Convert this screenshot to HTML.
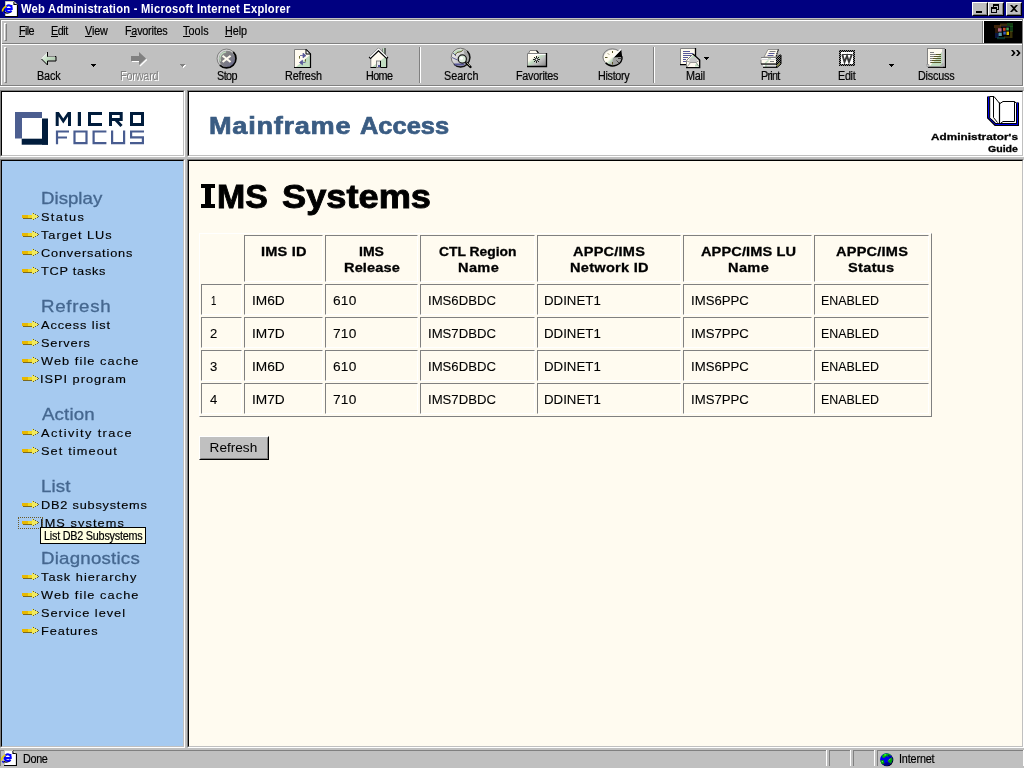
<!DOCTYPE html>
<html><head><meta charset="utf-8"><title>Web Administration - Microsoft Internet Explorer</title>
<style>
html,body{margin:0;padding:0;}
body{width:1024px;height:768px;overflow:hidden;background:#c0c0c0;font-family:"Liberation Sans",sans-serif;position:relative;}
div,span,svg{position:absolute;box-sizing:border-box;}
#win{left:0;top:0;width:1024px;height:768px;will-change:transform;}
.t{white-space:nowrap;transform-origin:0 0;line-height:normal;}
.px{background:#808080;}
.wh{background:#fff;}
.bk{background:#000;}
u{text-decoration:none;}
</style></head>
<body>
<div id="win">
<div style="left:0px;top:0px;width:1024px;height:18px;background:#000080;"></div>
<svg style="left:0px;top:0px" width="18" height="17" viewBox="0 0 18 17"><path d="M5.5 1.5H14L17.5 5V16.5H5.5Z" fill="#fff"/><path d="M14 1V4.5H17.5M17.5 4.5V16.5H5" stroke="#000" stroke-width="1.2" fill="none"/><path d="M5.5 16V1.5H14L17 4.5" stroke="#c8c8b8" stroke-width="1" fill="none"/><path d="M4.5 12.2C6 13.3 9 13.2 11.5 11.5" stroke="#000" stroke-width="1.2" fill="none"/><path d="M11.6 10.6C10 12.4 6.5 12.3 5.6 9.6C4.8 6.6 8 4.2 10.5 5.8C11.6 6.6 12 7.6 11.8 9H6" stroke="#0000ff" stroke-width="2" fill="none"/><rect x="11" y="5" width="1.4" height="1.4" fill="#0000ff"/><path d="M2.5 11.5C2.5 9 4.5 7 6.5 6" stroke="#e8d000" stroke-width="1.6" fill="none"/><path d="M3.2 12L4.6 14" stroke="#0000ff" stroke-width="1.2"/></svg>
<span class="t" style="left:21.00px;top:2px;line-height:14px;font-size:12px;font-weight:bold;color:#fff;letter-spacing:0.274px;transform:scaleX(0.9300);">Web Administration - Microsoft Internet Explorer</span>
<div style="left:972px;top:2px;width:16px;height:14px;background:#c0c0c0;border:1px solid;border-color:#fff #000 #000 #fff;">
<div style="left:0;top:0;width:14px;height:12px;border:1px solid;border-color:#c0c0c0 #808080 #808080 #c0c0c0;"></div>
<div style="left:3px;top:8px;width:6px;height:2px;background:#000"></div></div>
<div style="left:988px;top:2px;width:16px;height:14px;background:#c0c0c0;border:1px solid;border-color:#fff #000 #000 #fff;">
<div style="left:0;top:0;width:14px;height:12px;border:1px solid;border-color:#c0c0c0 #808080 #808080 #c0c0c0;"></div>
<div style="left:4px;top:1px;width:6px;height:6px;border:1px solid #000;border-top-width:2px;"></div>
<div style="left:2px;top:4px;width:6px;height:6px;border:1px solid #000;border-top-width:2px;background:#c0c0c0"></div></div>
<div style="left:1006px;top:2px;width:16px;height:14px;background:#c0c0c0;border:1px solid;border-color:#fff #000 #000 #fff;">
<div style="left:0;top:0;width:14px;height:12px;border:1px solid;border-color:#c0c0c0 #808080 #808080 #c0c0c0;"></div>
<svg style="left:3px;top:2px" width="8" height="7" viewBox="0 0 8 7"><path d="M0 0h2l2 2 2-2h2L5 3.5 8 7H6L4 5 2 7H0l3-3.5z" fill="#000"/></svg></div>
<div style="left:0px;top:18px;width:1024px;height:1px;background:#c0c0c0;"></div>
<div style="left:0px;top:19px;width:1024px;height:1px;background:#808080;"></div>
<div style="left:0px;top:20px;width:1024px;height:1px;background:#fff;"></div>
<div style="left:0px;top:19px;width:1px;height:67px;background:#808080;"></div>
<div style="left:1px;top:20px;width:1px;height:66px;background:#fff;"></div>
<div style="left:1022px;top:20px;width:1px;height:66px;background:#808080;"></div>
<div style="left:1023px;top:19px;width:1px;height:68px;background:#fff;"></div>
<div style="left:2px;top:43px;width:1020px;height:1px;background:#808080;"></div>
<div style="left:2px;top:44px;width:1020px;height:1px;background:#fff;"></div>
<div style="left:0px;top:85px;width:1023px;height:1px;background:#808080;"></div>
<div style="left:0px;top:86px;width:1024px;height:1px;background:#fff;"></div>
<div style="left:4px;top:23px;width:3px;height:18px;border:1px solid;border-color:#fff #808080 #808080 #fff;background:#c0c0c0"></div>
<div style="left:4px;top:47px;width:3px;height:36px;border:1px solid;border-color:#fff #808080 #808080 #fff;background:#c0c0c0"></div>
<div style="left:982px;top:21px;width:1px;height:22px;background:#808080;"></div>
<div style="left:983px;top:21px;width:1px;height:22px;background:#fff;"></div>
<div style="left:984px;top:21px;width:38px;height:22px;background:#000;"></div>
<svg style="left:984px;top:21px" width="38" height="22" viewBox="984 21 38 22"><g opacity=".9"><rect x="994" y="25" width="7" height="3" fill="#804818" opacity="0.55"/><rect x="1000" y="23.5" width="7" height="3" fill="#806020" opacity="0.5"/><rect x="1007" y="23" width="6" height="4" fill="#207020" opacity="0.6"/><rect x="1010" y="26" width="3" height="6" fill="#208030" opacity="0.5"/><rect x="1010" y="31" width="2.5" height="7" fill="#706010" opacity="0.55"/><rect x="995" y="28" width="3" height="5" fill="#603818" opacity="0.5"/><rect x="995" y="33" width="4" height="5" fill="#182878" opacity="0.6"/><rect x="997" y="37" width="8" height="2.2" fill="#106858" opacity="0.55"/><rect x="1004" y="36.3" width="6" height="1.8" fill="#605010" opacity="0.5"/><rect x="1001.5" y="26" width="8" height="1" fill="#302060" opacity="0.6"/><rect x="1002.4" y="26.8" width="7.4" height="9" fill="#000"/><rect x="1003" y="27.8" width="2.6" height="3" fill="#e05030"/><rect x="1006.3" y="27.6" width="2.5" height="2.8" fill="#48b860"/><rect x="1003.3" y="31.6" width="2.5" height="3" fill="#4068d0"/><rect x="1006.5" y="31.6" width="2.5" height="3.4" fill="#f0d000"/><rect x="998" y="28.2" width="3.6" height="3.4" fill="#c87090"/><rect x="998.6" y="32.6" width="3.2" height="3.4" fill="#60a8b8"/></g></svg>
<span class="t" style="left:19.10px;top:24px;line-height:14px;font-size:12px;font-weight:normal;color:#000;letter-spacing:-0.702px;transform:scaleX(0.9000);-webkit-text-stroke:0.2px #000;">File</span>
<span class="t" style="left:51.40px;top:24px;line-height:14px;font-size:12px;font-weight:normal;color:#000;letter-spacing:-0.522px;transform:scaleX(0.9000);-webkit-text-stroke:0.2px #000;">Edit</span>
<span class="t" style="left:85.10px;top:24px;line-height:14px;font-size:12px;font-weight:normal;color:#000;letter-spacing:-0.116px;transform:scaleX(0.9000);-webkit-text-stroke:0.2px #000;">View</span>
<span class="t" style="left:124.70px;top:24px;line-height:14px;font-size:12px;font-weight:normal;color:#000;letter-spacing:-0.252px;transform:scaleX(0.9000);-webkit-text-stroke:0.2px #000;">Favorites</span>
<span class="t" style="left:183.30px;top:24px;line-height:14px;font-size:12px;font-weight:normal;color:#000;letter-spacing:0.108px;transform:scaleX(0.9000);-webkit-text-stroke:0.2px #000;">Tools</span>
<span class="t" style="left:225.10px;top:24px;line-height:14px;font-size:12px;font-weight:normal;color:#000;letter-spacing:-0.076px;transform:scaleX(0.9000);-webkit-text-stroke:0.2px #000;">Help</span>
<div style="left:19px;top:36px;width:6px;height:1px;background:#000;"></div>
<div style="left:51px;top:36px;width:7px;height:1px;background:#000;"></div>
<div style="left:85px;top:36px;width:7px;height:1px;background:#000;"></div>
<div style="left:130px;top:36px;width:6px;height:1px;background:#000;"></div>
<div style="left:183px;top:36px;width:7px;height:1px;background:#000;"></div>
<div style="left:225px;top:36px;width:7px;height:1px;background:#000;"></div>
<span class="t" style="left:121.00px;top:70px;line-height:14px;font-size:12px;font-weight:normal;color:#fff;letter-spacing:-0.186px;transform:scaleX(0.9000);">Forward</span>
<span class="t" style="left:120.00px;top:69px;line-height:14px;font-size:12px;font-weight:normal;color:#808080;letter-spacing:-0.186px;transform:scaleX(0.9000);">Forward</span>
<span class="t" style="left:36.70px;top:69px;line-height:14px;font-size:12px;font-weight:normal;color:#000;letter-spacing:-0.152px;transform:scaleX(0.9000);-webkit-text-stroke:0.2px #000;">Back</span>
<span class="t" style="left:217.10px;top:69px;line-height:14px;font-size:12px;font-weight:normal;color:#000;letter-spacing:-0.634px;transform:scaleX(0.9000);-webkit-text-stroke:0.2px #000;">Stop</span>
<span class="t" style="left:284.80px;top:69px;line-height:14px;font-size:12px;font-weight:normal;color:#000;letter-spacing:-0.150px;transform:scaleX(0.9000);-webkit-text-stroke:0.2px #000;">Refresh</span>
<span class="t" style="left:365.60px;top:69px;line-height:14px;font-size:12px;font-weight:normal;color:#000;letter-spacing:-0.668px;transform:scaleX(0.9000);-webkit-text-stroke:0.2px #000;">Home</span>
<span class="t" style="left:444.10px;top:69px;line-height:14px;font-size:12px;font-weight:normal;color:#000;letter-spacing:0.042px;transform:scaleX(0.9000);-webkit-text-stroke:0.2px #000;">Search</span>
<span class="t" style="left:515.70px;top:69px;line-height:14px;font-size:12px;font-weight:normal;color:#000;letter-spacing:-0.266px;transform:scaleX(0.9000);-webkit-text-stroke:0.2px #000;">Favorites</span>
<span class="t" style="left:597.50px;top:69px;line-height:14px;font-size:12px;font-weight:normal;color:#000;letter-spacing:-0.352px;transform:scaleX(0.9000);-webkit-text-stroke:0.2px #000;">History</span>
<span class="t" style="left:685.80px;top:69px;line-height:14px;font-size:12px;font-weight:normal;color:#000;letter-spacing:-0.223px;transform:scaleX(0.9000);-webkit-text-stroke:0.2px #000;">Mail</span>
<span class="t" style="left:761.10px;top:69px;line-height:14px;font-size:12px;font-weight:normal;color:#000;letter-spacing:-0.835px;transform:scaleX(0.9000);-webkit-text-stroke:0.2px #000;">Print</span>
<span class="t" style="left:838.10px;top:69px;line-height:14px;font-size:12px;font-weight:normal;color:#000;letter-spacing:-0.337px;transform:scaleX(0.9000);-webkit-text-stroke:0.2px #000;">Edit</span>
<span class="t" style="left:917.70px;top:69px;line-height:14px;font-size:12px;font-weight:normal;color:#000;letter-spacing:-0.205px;transform:scaleX(0.9000);-webkit-text-stroke:0.2px #000;">Discuss</span>
<div style="left:419px;top:47px;width:1px;height:36px;background:#808080;"></div>
<div style="left:420px;top:47px;width:1px;height:36px;background:#fff;"></div>
<div style="left:653px;top:47px;width:1px;height:36px;background:#808080;"></div>
<div style="left:654px;top:47px;width:1px;height:36px;background:#fff;"></div>
<svg style="left:91px;top:64px" width="5" height="3" viewBox="0 0 5 3" shape-rendering="crispEdges"><path d="M0 0h5v1h-1v1h-1v1h-1v-1h-1v-1h-1z" fill="#000"/></svg>
<svg style="left:181px;top:65px" width="5" height="3" viewBox="0 0 5 3" shape-rendering="crispEdges"><path d="M0 0h5v1h-1v1h-1v1h-1v-1h-1v-1h-1z" fill="#fff"/></svg>
<svg style="left:180px;top:64px" width="5" height="3" viewBox="0 0 5 3" shape-rendering="crispEdges"><path d="M0 0h5v1h-1v1h-1v1h-1v-1h-1v-1h-1z" fill="#808080"/></svg>
<svg style="left:704px;top:57px" width="5" height="3" viewBox="0 0 5 3" shape-rendering="crispEdges"><path d="M0 0h5v1h-1v1h-1v1h-1v-1h-1v-1h-1z" fill="#000"/></svg>
<svg style="left:889px;top:64px" width="5" height="3" viewBox="0 0 5 3" shape-rendering="crispEdges"><path d="M0 0h5v1h-1v1h-1v1h-1v-1h-1v-1h-1z" fill="#000"/></svg>
<svg style="left:1011px;top:50px" width="10" height="6" viewBox="0 0 10 6"><path d="M0 0h2L4.6 3 2 6H0l2.4-3zM5 0h2L9.6 3 7 6H5l2.4-3z" fill="#000"/></svg>
<svg style="left:0;top:44px" width="1024" height="42" viewBox="0 44 1024 42"><defs>
<pattern id="chk" width="2" height="2" patternUnits="userSpaceOnUse"><rect width="2" height="2" fill="#c0c0c0"/><rect width="1" height="1" fill="#000"/><rect x="1" y="1" width="1" height="1" fill="#000"/></pattern>
<pattern id="chkw" width="2" height="2" patternUnits="userSpaceOnUse"><rect width="2" height="2" fill="#fff"/><rect width="1" height="1" fill="#000"/><rect x="1" y="1" width="1" height="1" fill="#000"/></pattern>
<pattern id="chkg" width="2" height="2" patternUnits="userSpaceOnUse"><rect width="2" height="2" fill="#808080"/><rect width="1" height="1" fill="#000"/><rect x="1" y="1" width="1" height="1" fill="#000"/></pattern>
<linearGradient id="gback" x1="0" y1="0" x2="1" y2="1"><stop offset="0" stop-color="#fff"/><stop offset=".5" stop-color="#c0dcc0"/><stop offset="1" stop-color="#a8b8a8"/></linearGradient>
<linearGradient id="gstop" x1="0" y1="0" x2="1" y2="1"><stop offset="0" stop-color="#a0a8a0"/><stop offset=".35" stop-color="#808080"/><stop offset=".7" stop-color="#787888"/><stop offset="1" stop-color="#585890"/></linearGradient>
<linearGradient id="gfold" x1="0" y1="0" x2="1" y2="1"><stop offset="0" stop-color="#fffbf0"/><stop offset=".3" stop-color="#fffbf0"/><stop offset=".45" stop-color="#c0dcc0"/><stop offset=".6" stop-color="#c0c0c0"/><stop offset="1" stop-color="#808080"/></linearGradient>
<linearGradient id="ghist" x1="0" y1="0" x2="1" y2="1"><stop offset="0" stop-color="#fffbf0"/><stop offset=".45" stop-color="#fffbf0"/><stop offset=".55" stop-color="#c0dcc0"/><stop offset=".65" stop-color="#b0b0b0"/><stop offset="1" stop-color="#909090"/></linearGradient>
<linearGradient id="gglobe" x1="0" y1="0" x2="1" y2="1"><stop offset="0" stop-color="#fffbf0"/><stop offset=".4" stop-color="#d8d8d8"/><stop offset="1" stop-color="#9090a0"/></linearGradient>
</defs><path d="M41.5 58.5L47.5 52.5V56.5H55.5V60.5H47.5V64.5Z" fill="url(#gback)"/><path d="M41.5 58.5L47.5 52.5" stroke="#e8e8e8" stroke-width="1" fill="none"/><path d="M47.5 52V56.5H56V61H47.5V65L41.5 59" stroke="#000" stroke-width="1" fill="none"/><path d="M48 56.5H55" stroke="#808080" stroke-width="1" fill="none"/><path d="M132 61.5H139.5M146.8 59.5L140 66" stroke="#fff" stroke-width="1.2" fill="none"/><path d="M131 56H139V52L146 58.5L139 65V61H131Z" fill="#808080"/><circle cx="226.5" cy="58.5" r="9.2" fill="#d4d4d4"/><circle cx="227" cy="59" r="8.2" fill="url(#gstop)"/><path d="M219.8 65.2A9.2 9.2 0 0 0 233.2 51.8" stroke="#000" stroke-width="1.7" fill="none"/><path d="M219.8 65.2A9.2 9.2 0 0 1 233.2 51.8" stroke="#808080" stroke-width="1" fill="none"/><path d="M220.3 61.5A7 7 0 0 1 226 51.8" stroke="#c0dcc0" stroke-width="1.3" fill="none"/><path d="M222.6 55.7L230.6 62M230.6 55.7L222.6 62" stroke="#fffbf0" stroke-width="2.1" fill="none"/><path d="M294.5 49.5H306L310.5 54V67.5H294.5Z" fill="#fffbf0"/><path d="M296 67L310 55V67.5Z" fill="#c0dcc0"/><path d="M294.5 67.5V49.5H306" stroke="#808080" fill="none"/><path d="M306 49.5L310.5 54V67.5H294" stroke="#000" stroke-width="1.2" fill="none"/><path d="M306 49.5V54H310.5Z" fill="#fff" stroke="#000"/><path d="M300 55.5H303V53.2L306 55.5L303 57.8V55.5" fill="#585898" stroke="#585898" stroke-width=".8"/><path d="M305.5 62.5H302.5V60.2L299.5 62.5L302.5 64.8V62.5" fill="#585898" stroke="#585898" stroke-width=".8"/><path d="M299.5 56V58.6M305.5 59.2V61.6" stroke="#686830" stroke-width="1" fill="none"/><path d="M371 58L378.5 51L386.5 58V67.5H371Z" fill="#fffbf0"/><path d="M372 67L386.5 56V67.5Z" fill="#c0dcc0"/><path d="M370.8 58V67.5" stroke="#808080" fill="none"/><path d="M370.5 67.5H387M386.7 58V67.5" stroke="#000" stroke-width="1.2" fill="none"/><rect x="382.5" y="48" width="2.5" height="7" fill="#c0dcc0"/><path d="M385 48V55.5" stroke="#000" stroke-width="1"/><path d="M382.5 48.5V53" stroke="#808080"/><path d="M369.6 58.4L378.5 49.7L387.5 58.4" stroke="#000" stroke-width="2.7" fill="none" stroke-linecap="butt"/><path d="M370 57.3L378.5 49L387 57.3" stroke="#fff" stroke-width="1.3" fill="none" stroke-linecap="butt"/><rect x="376.5" y="61" width="4" height="6.5" fill="#e8e8e8" stroke="#808080"/><path d="M380.5 61V67.5" stroke="#000"/><rect x="378" y="65" width="2" height="2" fill="#5858a0"/><circle cx="460.5" cy="57.5" r="9.3" fill="url(#gglobe)"/><path d="M463.5 49.5L468 53L469.5 57.5L468.5 62L465.5 63L466 57L464 53Z" fill="#a4a4a4"/><circle cx="460.5" cy="57.5" r="9.3" fill="none" stroke="#707070" stroke-width="1"/><path d="M454 64.2A9.3 9.3 0 0 0 467.2 51" stroke="#101010" stroke-width="1.4" fill="none"/><path d="M452.5 53.5C455 50 458 49.5 462.5 49.7L461 51.5L456.5 52.5L454.5 55Z" fill="#c0dcc0"/><path d="M455 55L457 52.5L461.5 51.5L463 49.5" stroke="#585828" stroke-width="1" fill="none"/><path d="M452 57.5L457.5 60M453 53L456 56" stroke="#50508c" stroke-width=".9" fill="none"/><path d="M455 65.5H463.5L465 63.5H454Z" fill="#585898"/><path d="M466 62.5L470.5 67" stroke="#000" stroke-width="2.4" fill="none" stroke-linecap="round"/><path d="M466.5 62.5L470 66" stroke="#b0b090" stroke-width=".9" fill="none"/><circle cx="462.3" cy="59" r="4.1" fill="#dcecdc" stroke="#181818" stroke-width="1.2"/><circle cx="461.5" cy="58.3" r="1.5" fill="#fff"/><path d="M528.5 53.5L530 50.5H536.5L538 53.5" fill="#fffbf0" stroke="#808080"/><path d="M536.5 50.5L538.5 53" stroke="#000" stroke-width="1.2"/><rect x="527.5" y="53.5" width="19" height="13" fill="url(#gfold)"/><path d="M527.5 66.5V53.5H546" stroke="#808080" fill="none"/><path d="M527 66.5H546.5V53" stroke="#000" stroke-width="1.3" fill="none"/><path d="M528.5 54.5H545.5" stroke="#fff" stroke-width="1"/><path d="M536.5 56V63M533 59.5H540M534 57L539 62M539 57L534 62" stroke="#202020" stroke-width="1" fill="none"/><circle cx="536.5" cy="59.5" r="1" fill="#fff"/><ellipse cx="612.8" cy="57.8" rx="9.2" ry="8" fill="url(#ghist)"/><path d="M613 57.5H622A9.2 8 0 0 1 612 65.8Z" fill="#a0a0a0"/><path d="M605.6 62.8A9.2 8 0 0 0 621.9 56.5" stroke="#000" stroke-width="1.5" fill="none"/><path d="M605.6 62.8A9.2 8 0 0 1 619 51.2" stroke="#808080" stroke-width="1" fill="none"/><path d="M613.5 57.5L621.3 49.8L622.2 57Z" fill="#000"/><path d="M613 57.2L620.8 49.3" stroke="#fff" stroke-width="1.3" fill="none"/><path d="M612.5 51V53M605 57.5H607.5M612.5 62V64.5M608 53.5L609 54.5" stroke="#585828" stroke-width="1" fill="none"/><path d="M616.5 60.5L619 63M618 58.5H621.5" stroke="#404040" stroke-width="1" fill="none"/><rect x="680.5" y="48.5" width="15" height="16" fill="#fffbf0"/><path d="M680.5 64.5V48.5H695.5" stroke="#808080" fill="none"/><path d="M695.5 48V56M680 64.7H687" stroke="#000" stroke-width="1.3" fill="none"/><path d="M683 51.5H690M683 53.5H693M683 55.5H691M683 57.5H688M683 59.5H686M683 61.5H686" stroke="#585898" stroke-width="1" fill="none"/><path d="M686.5 60.5L693 54L699.5 60V67.5H686.5Z" fill="#fffbf0"/><path d="M689 59.5L693 55.5L698 59.5L696 62H690Z" fill="#c8c8c8"/><path d="M690 58.5L693.5 55L695.5 57Z" fill="#c0dcc0"/><path d="M695 65L697 63L699 66.5H695Z" fill="#c0dcc0"/><path d="M686.5 67.5V60.5L693 54" stroke="#808080" fill="none"/><path d="M687 61L690.5 62.5H696L699 60.5M687 67L690.5 62.5M696 62.5L699.5 67" stroke="#808080" stroke-width=".8" fill="none"/><path d="M693 54L699.7 60V67.6H686" stroke="#000" stroke-width="1.3" fill="none"/><path d="M768 49.5H778L776 57H764Z" fill="#fffbf0" stroke="#808080" stroke-width=".8"/><path d="M769.5 51.5H775.5" stroke="#808080"/><path d="M768.5 53.5H774.5M767.5 55.5H773.5" stroke="#585898"/><path d="M778.5 49.5L776 57" stroke="#000" stroke-width="1.2" stroke-dasharray="1 1"/><path d="M776 57L779 54.5H781V64L777 67.5H776Z" fill="url(#chkg)"/><path d="M781 55V64L777 67.5" stroke="#000" stroke-width="1" fill="none"/><path d="M777 66L780 63" stroke="#787838" stroke-width="1.4"/><rect x="761" y="57" width="15" height="3" fill="#d8d8d8"/><path d="M761 57.5H776" stroke="#808080"/><path d="M762 58.5H775" stroke="#fff"/><path d="M768 58.5H771" stroke="#c0dcc0"/><rect x="761" y="60" width="15" height="4" fill="#fffbf0"/><path d="M761 60V64" stroke="#808080"/><path d="M765 63.5L768.5 60.5" stroke="#c0dcc0" stroke-width="1.4"/><path d="M770 61.5H774" stroke="#808080"/><path d="M761 64H777" stroke="#000" stroke-width="1.2"/><rect x="763" y="65" width="13" height="2" fill="#e0e0e0"/><rect x="763" y="65" width="2" height="2" fill="#fff"/><rect x="765" y="65" width="2" height="2" fill="#c0dcc0"/><path d="M763 67.3H777" stroke="#000" stroke-width="1.2"/><rect x="839" y="50" width="16" height="16" fill="url(#chkg)"/><rect x="841" y="52" width="12" height="12" fill="#fff"/><path d="M842.3 54.5L844.5 62L847 56L849 62L851.8 54.5" stroke="#383838" stroke-width="1.9" fill="none" stroke-linejoin="miter"/><path d="M842 54.5H852.5" stroke="#383838" stroke-width="1"/><rect x="928" y="49" width="18" height="19" fill="#000"/><rect x="927.5" y="48.5" width="17" height="18" fill="#fffbf0" stroke="#808080"/><path d="M930 66L943.5 50V66Z" fill="#c0dcc0"/><rect x="942" y="49" width="2.5" height="17" fill="#c8c8c8"/><path d="M926.5 64.5H929V66.5H940L943 63.5V66.8H927Z" fill="#c8c8c8" stroke="#909090" stroke-width=".6"/><path d="M930 52.5H934M930 54.5H936M930 56.5H934M930 58.5H933M930 60.5H932M930 62.5H931" stroke="#808080"/><path d="M936 54.5H941M934 56.5H941M933 58.5H941M932 60.5H941M931 62.5H941" stroke="#585828"/></svg>
<div style="left:0px;top:90px;width:185px;height:67px;border:1px solid;border-color:#808080 #fff #fff #808080;">
<div style="left:0;top:0;width:183px;height:65px;border:1px solid;border-color:#000 #c0c0c0 #c0c0c0 #000;background:#fff;overflow:hidden">
<svg style="left:0;top:0" width="181" height="63" viewBox="2 92 181 63"><rect x="15" y="112" width="27" height="6" fill="#4c5e90"/><rect x="15" y="112" width="7" height="26.5" fill="#4c5e90"/><rect x="42" y="118.5" width="6" height="26.2" fill="#001c3c"/><rect x="21.7" y="138.7" width="26.3" height="6" fill="#001c3c"/><path d="M55.7 126V112H58.9L63.3 118.6L67.8 112H71V126H68V116.6L63.3 123.4L58.7 116.6V126Z" fill="#001c3c"/><path d="M79.4 112V126" fill="none" stroke="#001c3c" stroke-width="3.2" stroke-linejoin="miter"/><path d="M102 113.5H89.5V124.5H102" fill="none" stroke="#001c3c" stroke-width="3" stroke-linejoin="miter"/><path d="M110.5 126V113.5H121.2V119.5H110.5M115.5 119.5L121.5 126" fill="none" stroke="#001c3c" stroke-width="3" stroke-linejoin="miter"/><path d="M131.5 113.5H142.5V124.5H131.5Z" fill="none" stroke="#001c3c" stroke-width="3" stroke-linejoin="miter"/><path d="M57 144.3V131.5H69M57 137.5H67" fill="none" stroke="#485c90" stroke-width="2.2" stroke-linejoin="miter"/><path d="M74.5 131.5H86.5V143.2H74.5Z" fill="none" stroke="#485c90" stroke-width="2.2" stroke-linejoin="miter"/><path d="M106.4 131.5H93.6V143.2H106.4" fill="none" stroke="#485c90" stroke-width="2.2" stroke-linejoin="miter"/><path d="M112.1 130.4V143.2H124.1V130.4" fill="none" stroke="#485c90" stroke-width="2.2" stroke-linejoin="miter"/><path d="M144 131.5H131.1V137.3H142.9V143.2H130" fill="none" stroke="#485c90" stroke-width="2.2" stroke-linejoin="miter"/></svg></div></div>
<div style="left:187px;top:90px;width:837px;height:67px;border:1px solid;border-color:#808080 #fff #fff #808080;">
<div style="left:0;top:0;width:835px;height:65px;border:1px solid;border-color:#000 #c0c0c0 #c0c0c0 #000;background:#fff;overflow:hidden">
<span class="t" style="left:20.12px;top:20px;line-height:27px;font-size:24px;font-weight:bold;color:#3a5c83;letter-spacing:0.651px;transform:scaleX(1.1300);-webkit-text-stroke:0.7px #3a5c83;">Mainframe</span>
<span class="t" style="left:170.95px;top:20px;line-height:27px;font-size:24px;font-weight:bold;color:#3a5c83;letter-spacing:0.000px;transform:scaleX(1.0595);-webkit-text-stroke:0.7px #3a5c83;">Access</span>
<span class="t" style="left:742.15px;top:39px;line-height:11px;font-size:9.4px;font-weight:bold;color:#000;letter-spacing:0.048px;transform:scaleX(1.2500);-webkit-text-stroke:0.3px #000;">Administrator's</span>
<span class="t" style="left:799.15px;top:51px;line-height:11px;font-size:9.4px;font-weight:bold;color:#000;letter-spacing:-0.000px;transform:scaleX(1.1271);-webkit-text-stroke:0.3px #000;">Guide</span>
<svg style="left:795px;top:2px" width="40" height="36" viewBox="984 94 40 36"><path d="M988.5 96.5V117.7L995.3 124.5H1017.5V102.5" stroke="#000" stroke-width="3" fill="none" stroke-linejoin="miter"/><path d="M988.5 96.5V117.7L995.3 124.5H1017.5V102.5" stroke="#0000e8" stroke-width="1" fill="none" stroke-linejoin="miter"/><path d="M989.6 96.5H994L999.5 103.5L1003 101.5H1014.5L1016.5 103.2V123.5H999.5L989.6 117.5Z" fill="#fff"/><path d="M989.7 117.8V96.5H994L999.5 103.3" stroke="#000" stroke-width="1" fill="none"/><path d="M993.5 96.5V117.5L997.5 122.5" stroke="#000" stroke-width="1" fill="none"/><path d="M999.5 102.5V124" stroke="#000" stroke-width="1.2" fill="none"/><path d="M1000 103.5L1003 101.5H1014.5L1016.5 103.3V123.5H1000" stroke="#000" stroke-width="1" fill="none"/><path d="M1014.5 101.5V121.5H1003L1000.3 123.6" stroke="#000" stroke-width="1" fill="none"/></svg></div></div>
<div style="left:0px;top:159px;width:185px;height:589px;border:1px solid;border-color:#808080 #fff #fff #808080;">
<div style="left:0;top:0;width:183px;height:587px;border:1px solid;border-color:#000 #c0c0c0 #c0c0c0 #000;background:#a6caf0;overflow:hidden">
<span class="t" style="left:39.05px;top:28px;line-height:19px;font-size:17px;font-weight:normal;color:#45678f;letter-spacing:0.000px;transform:scaleX(1.0988);-webkit-text-stroke:0.3px #45678f;">Display</span>
<span class="t" style="left:39.05px;top:136px;line-height:19px;font-size:17px;font-weight:normal;color:#45678f;letter-spacing:0.625px;transform:scaleX(1.1000);-webkit-text-stroke:0.3px #45678f;">Refresh</span>
<span class="t" style="left:40.15px;top:244px;line-height:19px;font-size:17px;font-weight:normal;color:#45678f;letter-spacing:0.114px;transform:scaleX(1.1000);-webkit-text-stroke:0.3px #45678f;">Action</span>
<span class="t" style="left:39.05px;top:316px;line-height:19px;font-size:17px;font-weight:normal;color:#45678f;letter-spacing:0.120px;transform:scaleX(1.1000);-webkit-text-stroke:0.3px #45678f;">List</span>
<span class="t" style="left:39.05px;top:388px;line-height:19px;font-size:17px;font-weight:normal;color:#45678f;letter-spacing:0.190px;transform:scaleX(1.1000);-webkit-text-stroke:0.3px #45678f;">Diagnostics</span>
<span class="t" style="left:39.38px;top:50px;line-height:12px;font-size:11.6px;font-weight:normal;color:#000;letter-spacing:1.213px;transform:scaleX(1.1000);-webkit-text-stroke:0.15px #000;">Status</span>
<svg style="left:20px;top:51px" width="17" height="9" viewBox="0 0 17 9" shape-rendering="crispEdges"><rect x="0" y="3" width="6" height="3" fill="#e8b800"/><rect x="6" y="3" width="5" height="3" fill="#f0d820"/><rect x="1" y="6" width="9" height="1" fill="#7a6a20"/><path d="M10 1h2v1h1v1h2v1h2v1h-2v1h-2v1h-1v1h-2z" fill="#f0e860"/><path d="M11 1h1v1h-1zM13 2h1v1h-1zM15 3h1v1h-1zM16 4h1v1h-1zM15 5h1v1h-1zM13 6h1v1h-1zM11 7h1v1h-1z" fill="#403810" opacity=".75"/></svg>
<span class="t" style="left:39.38px;top:68px;line-height:12px;font-size:11.6px;font-weight:normal;color:#000;letter-spacing:0.905px;transform:scaleX(1.1000);-webkit-text-stroke:0.15px #000;">Target LUs</span>
<svg style="left:20px;top:69px" width="17" height="9" viewBox="0 0 17 9" shape-rendering="crispEdges"><rect x="0" y="3" width="6" height="3" fill="#e8b800"/><rect x="6" y="3" width="5" height="3" fill="#f0d820"/><rect x="1" y="6" width="9" height="1" fill="#7a6a20"/><path d="M10 1h2v1h1v1h2v1h2v1h-2v1h-2v1h-1v1h-2z" fill="#f0e860"/><path d="M11 1h1v1h-1zM13 2h1v1h-1zM15 3h1v1h-1zM16 4h1v1h-1zM15 5h1v1h-1zM13 6h1v1h-1zM11 7h1v1h-1z" fill="#403810" opacity=".75"/></svg>
<span class="t" style="left:39.38px;top:86px;line-height:12px;font-size:11.6px;font-weight:normal;color:#000;letter-spacing:0.743px;transform:scaleX(1.1000);-webkit-text-stroke:0.15px #000;">Conversations</span>
<svg style="left:20px;top:87px" width="17" height="9" viewBox="0 0 17 9" shape-rendering="crispEdges"><rect x="0" y="3" width="6" height="3" fill="#e8b800"/><rect x="6" y="3" width="5" height="3" fill="#f0d820"/><rect x="1" y="6" width="9" height="1" fill="#7a6a20"/><path d="M10 1h2v1h1v1h2v1h2v1h-2v1h-2v1h-1v1h-2z" fill="#f0e860"/><path d="M11 1h1v1h-1zM13 2h1v1h-1zM15 3h1v1h-1zM16 4h1v1h-1zM15 5h1v1h-1zM13 6h1v1h-1zM11 7h1v1h-1z" fill="#403810" opacity=".75"/></svg>
<span class="t" style="left:39.38px;top:104px;line-height:12px;font-size:11.6px;font-weight:normal;color:#000;letter-spacing:0.672px;transform:scaleX(1.1000);-webkit-text-stroke:0.15px #000;">TCP tasks</span>
<svg style="left:20px;top:105px" width="17" height="9" viewBox="0 0 17 9" shape-rendering="crispEdges"><rect x="0" y="3" width="6" height="3" fill="#e8b800"/><rect x="6" y="3" width="5" height="3" fill="#f0d820"/><rect x="1" y="6" width="9" height="1" fill="#7a6a20"/><path d="M10 1h2v1h1v1h2v1h2v1h-2v1h-2v1h-1v1h-2z" fill="#f0e860"/><path d="M11 1h1v1h-1zM13 2h1v1h-1zM15 3h1v1h-1zM16 4h1v1h-1zM15 5h1v1h-1zM13 6h1v1h-1zM11 7h1v1h-1z" fill="#403810" opacity=".75"/></svg>
<span class="t" style="left:39.38px;top:158px;line-height:12px;font-size:11.6px;font-weight:normal;color:#000;letter-spacing:0.792px;transform:scaleX(1.1000);-webkit-text-stroke:0.15px #000;">Access list</span>
<svg style="left:20px;top:159px" width="17" height="9" viewBox="0 0 17 9" shape-rendering="crispEdges"><rect x="0" y="3" width="6" height="3" fill="#e8b800"/><rect x="6" y="3" width="5" height="3" fill="#f0d820"/><rect x="1" y="6" width="9" height="1" fill="#7a6a20"/><path d="M10 1h2v1h1v1h2v1h2v1h-2v1h-2v1h-1v1h-2z" fill="#f0e860"/><path d="M11 1h1v1h-1zM13 2h1v1h-1zM15 3h1v1h-1zM16 4h1v1h-1zM15 5h1v1h-1zM13 6h1v1h-1zM11 7h1v1h-1z" fill="#403810" opacity=".75"/></svg>
<span class="t" style="left:39.38px;top:176px;line-height:12px;font-size:11.6px;font-weight:normal;color:#000;letter-spacing:0.741px;transform:scaleX(1.1000);-webkit-text-stroke:0.15px #000;">Servers</span>
<svg style="left:20px;top:177px" width="17" height="9" viewBox="0 0 17 9" shape-rendering="crispEdges"><rect x="0" y="3" width="6" height="3" fill="#e8b800"/><rect x="6" y="3" width="5" height="3" fill="#f0d820"/><rect x="1" y="6" width="9" height="1" fill="#7a6a20"/><path d="M10 1h2v1h1v1h2v1h2v1h-2v1h-2v1h-1v1h-2z" fill="#f0e860"/><path d="M11 1h1v1h-1zM13 2h1v1h-1zM15 3h1v1h-1zM16 4h1v1h-1zM15 5h1v1h-1zM13 6h1v1h-1zM11 7h1v1h-1z" fill="#403810" opacity=".75"/></svg>
<span class="t" style="left:39.38px;top:194px;line-height:12px;font-size:11.6px;font-weight:normal;color:#000;letter-spacing:0.981px;transform:scaleX(1.1000);-webkit-text-stroke:0.15px #000;">Web file cache</span>
<svg style="left:20px;top:195px" width="17" height="9" viewBox="0 0 17 9" shape-rendering="crispEdges"><rect x="0" y="3" width="6" height="3" fill="#e8b800"/><rect x="6" y="3" width="5" height="3" fill="#f0d820"/><rect x="1" y="6" width="9" height="1" fill="#7a6a20"/><path d="M10 1h2v1h1v1h2v1h2v1h-2v1h-2v1h-1v1h-2z" fill="#f0e860"/><path d="M11 1h1v1h-1zM13 2h1v1h-1zM15 3h1v1h-1zM16 4h1v1h-1zM15 5h1v1h-1zM13 6h1v1h-1zM11 7h1v1h-1z" fill="#403810" opacity=".75"/></svg>
<span class="t" style="left:38.27px;top:212px;line-height:12px;font-size:11.6px;font-weight:normal;color:#000;letter-spacing:0.896px;transform:scaleX(1.1000);-webkit-text-stroke:0.15px #000;">ISPI program</span>
<svg style="left:20px;top:213px" width="17" height="9" viewBox="0 0 17 9" shape-rendering="crispEdges"><rect x="0" y="3" width="6" height="3" fill="#e8b800"/><rect x="6" y="3" width="5" height="3" fill="#f0d820"/><rect x="1" y="6" width="9" height="1" fill="#7a6a20"/><path d="M10 1h2v1h1v1h2v1h2v1h-2v1h-2v1h-1v1h-2z" fill="#f0e860"/><path d="M11 1h1v1h-1zM13 2h1v1h-1zM15 3h1v1h-1zM16 4h1v1h-1zM15 5h1v1h-1zM13 6h1v1h-1zM11 7h1v1h-1z" fill="#403810" opacity=".75"/></svg>
<span class="t" style="left:39.38px;top:266px;line-height:12px;font-size:11.6px;font-weight:normal;color:#000;letter-spacing:1.284px;transform:scaleX(1.1000);-webkit-text-stroke:0.15px #000;">Activity trace</span>
<svg style="left:20px;top:267px" width="17" height="9" viewBox="0 0 17 9" shape-rendering="crispEdges"><rect x="0" y="3" width="6" height="3" fill="#e8b800"/><rect x="6" y="3" width="5" height="3" fill="#f0d820"/><rect x="1" y="6" width="9" height="1" fill="#7a6a20"/><path d="M10 1h2v1h1v1h2v1h2v1h-2v1h-2v1h-1v1h-2z" fill="#f0e860"/><path d="M11 1h1v1h-1zM13 2h1v1h-1zM15 3h1v1h-1zM16 4h1v1h-1zM15 5h1v1h-1zM13 6h1v1h-1zM11 7h1v1h-1z" fill="#403810" opacity=".75"/></svg>
<span class="t" style="left:39.38px;top:284px;line-height:12px;font-size:11.6px;font-weight:normal;color:#000;letter-spacing:1.017px;transform:scaleX(1.1000);-webkit-text-stroke:0.15px #000;">Set timeout</span>
<svg style="left:20px;top:285px" width="17" height="9" viewBox="0 0 17 9" shape-rendering="crispEdges"><rect x="0" y="3" width="6" height="3" fill="#e8b800"/><rect x="6" y="3" width="5" height="3" fill="#f0d820"/><rect x="1" y="6" width="9" height="1" fill="#7a6a20"/><path d="M10 1h2v1h1v1h2v1h2v1h-2v1h-2v1h-1v1h-2z" fill="#f0e860"/><path d="M11 1h1v1h-1zM13 2h1v1h-1zM15 3h1v1h-1zM16 4h1v1h-1zM15 5h1v1h-1zM13 6h1v1h-1zM11 7h1v1h-1z" fill="#403810" opacity=".75"/></svg>
<span class="t" style="left:39.38px;top:338px;line-height:12px;font-size:11.6px;font-weight:normal;color:#000;letter-spacing:0.710px;transform:scaleX(1.1000);-webkit-text-stroke:0.15px #000;">DB2 subsystems</span>
<svg style="left:20px;top:339px" width="17" height="9" viewBox="0 0 17 9" shape-rendering="crispEdges"><rect x="0" y="3" width="6" height="3" fill="#e8b800"/><rect x="6" y="3" width="5" height="3" fill="#f0d820"/><rect x="1" y="6" width="9" height="1" fill="#7a6a20"/><path d="M10 1h2v1h1v1h2v1h2v1h-2v1h-2v1h-1v1h-2z" fill="#f0e860"/><path d="M11 1h1v1h-1zM13 2h1v1h-1zM15 3h1v1h-1zM16 4h1v1h-1zM15 5h1v1h-1zM13 6h1v1h-1zM11 7h1v1h-1z" fill="#403810" opacity=".75"/></svg>
<span class="t" style="left:38.27px;top:356px;line-height:12px;font-size:11.6px;font-weight:normal;color:#000;letter-spacing:0.986px;transform:scaleX(1.1000);-webkit-text-stroke:0.15px #000;">IMS systems</span>
<svg style="left:20px;top:357px" width="17" height="9" viewBox="0 0 17 9" shape-rendering="crispEdges"><rect x="0" y="3" width="6" height="3" fill="#e8b800"/><rect x="6" y="3" width="5" height="3" fill="#f0d820"/><rect x="1" y="6" width="9" height="1" fill="#7a6a20"/><path d="M10 1h2v1h1v1h2v1h2v1h-2v1h-2v1h-1v1h-2z" fill="#f0e860"/><path d="M11 1h1v1h-1zM13 2h1v1h-1zM15 3h1v1h-1zM16 4h1v1h-1zM15 5h1v1h-1zM13 6h1v1h-1zM11 7h1v1h-1z" fill="#403810" opacity=".75"/></svg>
<span class="t" style="left:39.38px;top:410px;line-height:12px;font-size:11.6px;font-weight:normal;color:#000;letter-spacing:0.917px;transform:scaleX(1.1000);-webkit-text-stroke:0.15px #000;">Task hierarchy</span>
<svg style="left:20px;top:411px" width="17" height="9" viewBox="0 0 17 9" shape-rendering="crispEdges"><rect x="0" y="3" width="6" height="3" fill="#e8b800"/><rect x="6" y="3" width="5" height="3" fill="#f0d820"/><rect x="1" y="6" width="9" height="1" fill="#7a6a20"/><path d="M10 1h2v1h1v1h2v1h2v1h-2v1h-2v1h-1v1h-2z" fill="#f0e860"/><path d="M11 1h1v1h-1zM13 2h1v1h-1zM15 3h1v1h-1zM16 4h1v1h-1zM15 5h1v1h-1zM13 6h1v1h-1zM11 7h1v1h-1z" fill="#403810" opacity=".75"/></svg>
<span class="t" style="left:39.38px;top:428px;line-height:12px;font-size:11.6px;font-weight:normal;color:#000;letter-spacing:0.981px;transform:scaleX(1.1000);-webkit-text-stroke:0.15px #000;">Web file cache</span>
<svg style="left:20px;top:429px" width="17" height="9" viewBox="0 0 17 9" shape-rendering="crispEdges"><rect x="0" y="3" width="6" height="3" fill="#e8b800"/><rect x="6" y="3" width="5" height="3" fill="#f0d820"/><rect x="1" y="6" width="9" height="1" fill="#7a6a20"/><path d="M10 1h2v1h1v1h2v1h2v1h-2v1h-2v1h-1v1h-2z" fill="#f0e860"/><path d="M11 1h1v1h-1zM13 2h1v1h-1zM15 3h1v1h-1zM16 4h1v1h-1zM15 5h1v1h-1zM13 6h1v1h-1zM11 7h1v1h-1z" fill="#403810" opacity=".75"/></svg>
<span class="t" style="left:39.38px;top:446px;line-height:12px;font-size:11.6px;font-weight:normal;color:#000;letter-spacing:0.885px;transform:scaleX(1.1000);-webkit-text-stroke:0.15px #000;">Service level</span>
<svg style="left:20px;top:447px" width="17" height="9" viewBox="0 0 17 9" shape-rendering="crispEdges"><rect x="0" y="3" width="6" height="3" fill="#e8b800"/><rect x="6" y="3" width="5" height="3" fill="#f0d820"/><rect x="1" y="6" width="9" height="1" fill="#7a6a20"/><path d="M10 1h2v1h1v1h2v1h2v1h-2v1h-2v1h-1v1h-2z" fill="#f0e860"/><path d="M11 1h1v1h-1zM13 2h1v1h-1zM15 3h1v1h-1zM16 4h1v1h-1zM15 5h1v1h-1zM13 6h1v1h-1zM11 7h1v1h-1z" fill="#403810" opacity=".75"/></svg>
<span class="t" style="left:39.38px;top:464px;line-height:12px;font-size:11.6px;font-weight:normal;color:#000;letter-spacing:0.818px;transform:scaleX(1.1000);-webkit-text-stroke:0.15px #000;">Features</span>
<svg style="left:20px;top:465px" width="17" height="9" viewBox="0 0 17 9" shape-rendering="crispEdges"><rect x="0" y="3" width="6" height="3" fill="#e8b800"/><rect x="6" y="3" width="5" height="3" fill="#f0d820"/><rect x="1" y="6" width="9" height="1" fill="#7a6a20"/><path d="M10 1h2v1h1v1h2v1h2v1h-2v1h-2v1h-1v1h-2z" fill="#f0e860"/><path d="M11 1h1v1h-1zM13 2h1v1h-1zM15 3h1v1h-1zM16 4h1v1h-1zM15 5h1v1h-1zM13 6h1v1h-1zM11 7h1v1h-1z" fill="#403810" opacity=".75"/></svg>
<div style="left:16px;top:356px;width:25px;height:12px;border:1px dotted #6b5a2a;"></div>
<div style="left:38px;top:366px;width:106px;height:17px;border:1px solid #000;background:#ffffe1;"></div>
<span class="t" style="left:41.70px;top:368px;line-height:14px;font-size:12px;font-weight:normal;color:#000;letter-spacing:-0.243px;transform:scaleX(0.9000);-webkit-text-stroke:0.2px #000;">List DB2 Subsystems</span></div></div>
<div style="left:187px;top:159px;width:837px;height:589px;border:1px solid;border-color:#808080 #fff #fff #808080;">
<div style="left:0;top:0;width:835px;height:587px;border:1px solid;border-color:#000 #c0c0c0 #c0c0c0 #000;background:#fffbf0;overflow:hidden">
<div style="left:16px;top:23px;width:6px;height:24px;background:#000"></div>
<div style="left:12px;top:23px;width:14px;height:4px;background:#000"></div>
<div style="left:12px;top:43px;width:14px;height:4px;background:#000"></div>
<span class="t" style="left:28.43px;top:16.599999999999994px;line-height:37px;font-size:33.5px;font-weight:bold;color:#000;letter-spacing:0.000px;transform:scaleX(1.0103);-webkit-text-stroke:0.9px #000;">MS</span>
<span class="t" style="left:93.25px;top:16.599999999999994px;line-height:37px;font-size:33.5px;font-weight:bold;color:#000;letter-spacing:0.000px;transform:scaleX(1.0811);-webkit-text-stroke:0.9px #000;">Systems</span>
<div style="left:10px;top:72px;width:733px;height:184px;border:1px solid;border-color:#fff #808080 #808080 #fff;"></div>
<div style="left:55px;top:74px;width:79px;height:47px;border:1px solid;border-color:#808080 #fff #fff #808080;"></div>
<div style="left:136px;top:74px;width:93px;height:47px;border:1px solid;border-color:#808080 #fff #fff #808080;"></div>
<div style="left:231px;top:74px;width:115px;height:47px;border:1px solid;border-color:#808080 #fff #fff #808080;"></div>
<div style="left:348px;top:74px;width:144px;height:47px;border:1px solid;border-color:#808080 #fff #fff #808080;"></div>
<div style="left:494px;top:74px;width:129px;height:47px;border:1px solid;border-color:#808080 #fff #fff #808080;"></div>
<div style="left:625px;top:74px;width:115px;height:47px;border:1px solid;border-color:#808080 #fff #fff #808080;"></div>
<div style="left:12px;top:123px;width:41px;height:31px;border:1px solid;border-color:#808080 #fff #fff #808080;"></div>
<div style="left:55px;top:123px;width:79px;height:31px;border:1px solid;border-color:#808080 #fff #fff #808080;"></div>
<div style="left:136px;top:123px;width:93px;height:31px;border:1px solid;border-color:#808080 #fff #fff #808080;"></div>
<div style="left:231px;top:123px;width:115px;height:31px;border:1px solid;border-color:#808080 #fff #fff #808080;"></div>
<div style="left:348px;top:123px;width:144px;height:31px;border:1px solid;border-color:#808080 #fff #fff #808080;"></div>
<div style="left:494px;top:123px;width:129px;height:31px;border:1px solid;border-color:#808080 #fff #fff #808080;"></div>
<div style="left:625px;top:123px;width:115px;height:31px;border:1px solid;border-color:#808080 #fff #fff #808080;"></div>
<div style="left:12px;top:156px;width:41px;height:31px;border:1px solid;border-color:#808080 #fff #fff #808080;"></div>
<div style="left:55px;top:156px;width:79px;height:31px;border:1px solid;border-color:#808080 #fff #fff #808080;"></div>
<div style="left:136px;top:156px;width:93px;height:31px;border:1px solid;border-color:#808080 #fff #fff #808080;"></div>
<div style="left:231px;top:156px;width:115px;height:31px;border:1px solid;border-color:#808080 #fff #fff #808080;"></div>
<div style="left:348px;top:156px;width:144px;height:31px;border:1px solid;border-color:#808080 #fff #fff #808080;"></div>
<div style="left:494px;top:156px;width:129px;height:31px;border:1px solid;border-color:#808080 #fff #fff #808080;"></div>
<div style="left:625px;top:156px;width:115px;height:31px;border:1px solid;border-color:#808080 #fff #fff #808080;"></div>
<div style="left:12px;top:189px;width:41px;height:31px;border:1px solid;border-color:#808080 #fff #fff #808080;"></div>
<div style="left:55px;top:189px;width:79px;height:31px;border:1px solid;border-color:#808080 #fff #fff #808080;"></div>
<div style="left:136px;top:189px;width:93px;height:31px;border:1px solid;border-color:#808080 #fff #fff #808080;"></div>
<div style="left:231px;top:189px;width:115px;height:31px;border:1px solid;border-color:#808080 #fff #fff #808080;"></div>
<div style="left:348px;top:189px;width:144px;height:31px;border:1px solid;border-color:#808080 #fff #fff #808080;"></div>
<div style="left:494px;top:189px;width:129px;height:31px;border:1px solid;border-color:#808080 #fff #fff #808080;"></div>
<div style="left:625px;top:189px;width:115px;height:31px;border:1px solid;border-color:#808080 #fff #fff #808080;"></div>
<div style="left:12px;top:222px;width:41px;height:31px;border:1px solid;border-color:#808080 #fff #fff #808080;"></div>
<div style="left:55px;top:222px;width:79px;height:31px;border:1px solid;border-color:#808080 #fff #fff #808080;"></div>
<div style="left:136px;top:222px;width:93px;height:31px;border:1px solid;border-color:#808080 #fff #fff #808080;"></div>
<div style="left:231px;top:222px;width:115px;height:31px;border:1px solid;border-color:#808080 #fff #fff #808080;"></div>
<div style="left:348px;top:222px;width:144px;height:31px;border:1px solid;border-color:#808080 #fff #fff #808080;"></div>
<div style="left:494px;top:222px;width:129px;height:31px;border:1px solid;border-color:#808080 #fff #fff #808080;"></div>
<div style="left:625px;top:222px;width:115px;height:31px;border:1px solid;border-color:#808080 #fff #fff #808080;"></div>
<span class="t" style="left:71.75px;top:83px;line-height:15px;font-size:13px;font-weight:bold;color:#000;letter-spacing:0.186px;transform:scaleX(1.1200);-webkit-text-stroke:0.3px #000;">IMS ID</span>
<span class="t" style="left:170.15px;top:83px;line-height:15px;font-size:13px;font-weight:bold;color:#000;letter-spacing:-0.000px;transform:scaleX(1.0793);-webkit-text-stroke:0.3px #000;">IMS</span>
<span class="t" style="left:154.75px;top:99px;line-height:15px;font-size:13px;font-weight:bold;color:#000;letter-spacing:0.106px;transform:scaleX(1.1200);-webkit-text-stroke:0.3px #000;">Release</span>
<span class="t" style="left:249.65px;top:83px;line-height:15px;font-size:13px;font-weight:bold;color:#000;letter-spacing:0.000px;transform:scaleX(1.0645);-webkit-text-stroke:0.3px #000;">CTL Region</span>
<span class="t" style="left:268.65px;top:99px;line-height:15px;font-size:13px;font-weight:bold;color:#000;letter-spacing:0.328px;transform:scaleX(1.1200);-webkit-text-stroke:0.3px #000;">Name</span>
<span class="t" style="left:384.05px;top:83px;line-height:15px;font-size:13px;font-weight:bold;color:#000;letter-spacing:0.198px;transform:scaleX(1.1200);-webkit-text-stroke:0.3px #000;">APPC/IMS</span>
<span class="t" style="left:380.55px;top:99px;line-height:15px;font-size:13px;font-weight:bold;color:#000;letter-spacing:0.257px;transform:scaleX(1.1200);-webkit-text-stroke:0.3px #000;">Network ID</span>
<span class="t" style="left:511.95px;top:83px;line-height:15px;font-size:13px;font-weight:bold;color:#000;letter-spacing:0.098px;transform:scaleX(1.1200);-webkit-text-stroke:0.3px #000;">APPC/IMS LU</span>
<span class="t" style="left:538.75px;top:99px;line-height:15px;font-size:13px;font-weight:bold;color:#000;letter-spacing:0.328px;transform:scaleX(1.1200);-webkit-text-stroke:0.3px #000;">Name</span>
<span class="t" style="left:647.15px;top:83px;line-height:15px;font-size:13px;font-weight:bold;color:#000;letter-spacing:0.198px;transform:scaleX(1.1200);-webkit-text-stroke:0.3px #000;">APPC/IMS</span>
<span class="t" style="left:659.45px;top:99px;line-height:15px;font-size:13px;font-weight:bold;color:#000;letter-spacing:0.296px;transform:scaleX(1.1200);-webkit-text-stroke:0.3px #000;">Status</span>
<span class="t" style="left:21.65px;top:133px;line-height:14px;font-size:12.7px;font-weight:normal;color:#000;letter-spacing:0.000px;transform:scaleX(0.7571);-webkit-text-stroke:0.1px #000;">1</span>
<span class="t" style="left:62.77px;top:133px;line-height:14px;font-size:12.7px;font-weight:normal;color:#000;letter-spacing:0.006px;transform:scaleX(1.0800);-webkit-text-stroke:0.1px #000;">IM6D</span>
<span class="t" style="left:144.35px;top:133px;line-height:14px;font-size:12.7px;font-weight:normal;color:#000;letter-spacing:0.231px;transform:scaleX(1.0800);-webkit-text-stroke:0.1px #000;">610</span>
<span class="t" style="left:238.71px;top:133px;line-height:14px;font-size:12.7px;font-weight:normal;color:#000;letter-spacing:0.000px;transform:scaleX(1.0357);-webkit-text-stroke:0.1px #000;">IMS6DBDC</span>
<span class="t" style="left:355.20px;top:133px;line-height:14px;font-size:12.7px;font-weight:normal;color:#000;letter-spacing:0.000px;transform:scaleX(1.0465);-webkit-text-stroke:0.1px #000;">DDINET1</span>
<span class="t" style="left:501.71px;top:133px;line-height:14px;font-size:12.7px;font-weight:normal;color:#000;letter-spacing:0.000px;transform:scaleX(1.0378);-webkit-text-stroke:0.1px #000;">IMS6PPC</span>
<span class="t" style="left:632.37px;top:133px;line-height:14px;font-size:12.7px;font-weight:normal;color:#000;letter-spacing:0.000px;transform:scaleX(0.9799);-webkit-text-stroke:0.1px #000;">ENABLED</span>
<span class="t" style="left:20.75px;top:166px;line-height:14px;font-size:12.7px;font-weight:normal;color:#000;letter-spacing:0.000px;transform:scaleX(1.0286);-webkit-text-stroke:0.1px #000;">2</span>
<span class="t" style="left:62.77px;top:166px;line-height:14px;font-size:12.7px;font-weight:normal;color:#000;letter-spacing:0.006px;transform:scaleX(1.0800);-webkit-text-stroke:0.1px #000;">IM7D</span>
<span class="t" style="left:144.35px;top:166px;line-height:14px;font-size:12.7px;font-weight:normal;color:#000;letter-spacing:0.231px;transform:scaleX(1.0800);-webkit-text-stroke:0.1px #000;">710</span>
<span class="t" style="left:238.71px;top:166px;line-height:14px;font-size:12.7px;font-weight:normal;color:#000;letter-spacing:0.000px;transform:scaleX(1.0357);-webkit-text-stroke:0.1px #000;">IMS7DBDC</span>
<span class="t" style="left:355.20px;top:166px;line-height:14px;font-size:12.7px;font-weight:normal;color:#000;letter-spacing:0.000px;transform:scaleX(1.0465);-webkit-text-stroke:0.1px #000;">DDINET1</span>
<span class="t" style="left:501.71px;top:166px;line-height:14px;font-size:12.7px;font-weight:normal;color:#000;letter-spacing:0.000px;transform:scaleX(1.0378);-webkit-text-stroke:0.1px #000;">IMS7PPC</span>
<span class="t" style="left:632.37px;top:166px;line-height:14px;font-size:12.7px;font-weight:normal;color:#000;letter-spacing:0.000px;transform:scaleX(0.9799);-webkit-text-stroke:0.1px #000;">ENABLED</span>
<span class="t" style="left:20.75px;top:199px;line-height:14px;font-size:12.7px;font-weight:normal;color:#000;letter-spacing:0.000px;transform:scaleX(1.0286);-webkit-text-stroke:0.1px #000;">3</span>
<span class="t" style="left:62.77px;top:199px;line-height:14px;font-size:12.7px;font-weight:normal;color:#000;letter-spacing:0.006px;transform:scaleX(1.0800);-webkit-text-stroke:0.1px #000;">IM6D</span>
<span class="t" style="left:144.35px;top:199px;line-height:14px;font-size:12.7px;font-weight:normal;color:#000;letter-spacing:0.231px;transform:scaleX(1.0800);-webkit-text-stroke:0.1px #000;">610</span>
<span class="t" style="left:238.71px;top:199px;line-height:14px;font-size:12.7px;font-weight:normal;color:#000;letter-spacing:0.000px;transform:scaleX(1.0357);-webkit-text-stroke:0.1px #000;">IMS6DBDC</span>
<span class="t" style="left:355.20px;top:199px;line-height:14px;font-size:12.7px;font-weight:normal;color:#000;letter-spacing:0.000px;transform:scaleX(1.0465);-webkit-text-stroke:0.1px #000;">DDINET1</span>
<span class="t" style="left:501.71px;top:199px;line-height:14px;font-size:12.7px;font-weight:normal;color:#000;letter-spacing:0.000px;transform:scaleX(1.0378);-webkit-text-stroke:0.1px #000;">IMS6PPC</span>
<span class="t" style="left:632.37px;top:199px;line-height:14px;font-size:12.7px;font-weight:normal;color:#000;letter-spacing:0.000px;transform:scaleX(0.9799);-webkit-text-stroke:0.1px #000;">ENABLED</span>
<span class="t" style="left:20.75px;top:232px;line-height:14px;font-size:12.7px;font-weight:normal;color:#000;letter-spacing:0.000px;transform:scaleX(1.0286);-webkit-text-stroke:0.1px #000;">4</span>
<span class="t" style="left:62.77px;top:232px;line-height:14px;font-size:12.7px;font-weight:normal;color:#000;letter-spacing:0.006px;transform:scaleX(1.0800);-webkit-text-stroke:0.1px #000;">IM7D</span>
<span class="t" style="left:144.35px;top:232px;line-height:14px;font-size:12.7px;font-weight:normal;color:#000;letter-spacing:0.231px;transform:scaleX(1.0800);-webkit-text-stroke:0.1px #000;">710</span>
<span class="t" style="left:238.71px;top:232px;line-height:14px;font-size:12.7px;font-weight:normal;color:#000;letter-spacing:0.000px;transform:scaleX(1.0357);-webkit-text-stroke:0.1px #000;">IMS7DBDC</span>
<span class="t" style="left:355.20px;top:232px;line-height:14px;font-size:12.7px;font-weight:normal;color:#000;letter-spacing:0.000px;transform:scaleX(1.0465);-webkit-text-stroke:0.1px #000;">DDINET1</span>
<span class="t" style="left:501.71px;top:232px;line-height:14px;font-size:12.7px;font-weight:normal;color:#000;letter-spacing:0.000px;transform:scaleX(1.0378);-webkit-text-stroke:0.1px #000;">IMS7PPC</span>
<span class="t" style="left:632.37px;top:232px;line-height:14px;font-size:12.7px;font-weight:normal;color:#000;letter-spacing:0.000px;transform:scaleX(0.9799);-webkit-text-stroke:0.1px #000;">ENABLED</span>
<div style="left:10px;top:275px;width:70px;height:24px;background:#c0c0c0;border:1px solid;border-color:#fff #000 #000 #fff;">
<div style="left:0;top:0;width:68px;height:22px;border:1px solid;border-color:#c0c0c0 #808080 #808080 #c0c0c0;"></div></div>
<span class="t" style="left:20.60px;top:279px;line-height:15px;font-size:13.6px;font-weight:normal;color:#000;letter-spacing:0.000px;">Refresh</span></div></div>
<div style="left:0px;top:750px;width:827px;height:1px;background:#808080;"></div>
<div style="left:0px;top:751px;width:1px;height:15px;background:#808080;"></div>
<div style="left:826px;top:750px;width:1px;height:16px;background:#fff;"></div>
<div style="left:829px;top:750px;width:22px;height:1px;background:#808080;"></div>
<div style="left:829px;top:751px;width:1px;height:15px;background:#808080;"></div>
<div style="left:850px;top:750px;width:1px;height:16px;background:#fff;"></div>
<div style="left:853px;top:750px;width:22px;height:1px;background:#808080;"></div>
<div style="left:853px;top:751px;width:1px;height:15px;background:#808080;"></div>
<div style="left:874px;top:750px;width:1px;height:16px;background:#fff;"></div>
<div style="left:877px;top:750px;width:147px;height:1px;background:#808080;"></div>
<div style="left:877px;top:751px;width:1px;height:15px;background:#808080;"></div>
<div style="left:1023px;top:750px;width:1px;height:16px;background:#fff;"></div>
<span class="t" style="left:22.80px;top:752px;line-height:14px;font-size:12px;font-weight:normal;color:#000;letter-spacing:-0.375px;transform:scaleX(0.9000);-webkit-text-stroke:0.2px #000;">Done</span>
<span class="t" style="left:898.70px;top:752px;line-height:14px;font-size:12px;font-weight:normal;color:#000;letter-spacing:-0.162px;transform:scaleX(0.9000);-webkit-text-stroke:0.2px #000;">Internet</span>
<svg style="left:-1px;top:749px" width="18" height="17" viewBox="0 0 18 17"><path d="M5.5 1.5H14L17.5 5V16.5H5.5Z" fill="#fff"/><path d="M14 1V4.5H17.5M17.5 4.5V16.5H5" stroke="#000" stroke-width="1.2" fill="none"/><path d="M5.5 16V1.5H14L17 4.5" stroke="#c8c8b8" stroke-width="1" fill="none"/><path d="M4.5 12.2C6 13.3 9 13.2 11.5 11.5" stroke="#000" stroke-width="1.2" fill="none"/><path d="M11.6 10.6C10 12.4 6.5 12.3 5.6 9.6C4.8 6.6 8 4.2 10.5 5.8C11.6 6.6 12 7.6 11.8 9H6" stroke="#0000ff" stroke-width="2" fill="none"/><rect x="11" y="5" width="1.4" height="1.4" fill="#0000ff"/><path d="M2.5 11.5C2.5 9 4.5 7 6.5 6" stroke="#e8d000" stroke-width="1.6" fill="none"/><path d="M3.2 12L4.6 14" stroke="#0000ff" stroke-width="1.2"/></svg>
<svg style="left:879px;top:752px" width="16" height="16" viewBox="879 752 16 16"><circle cx="887" cy="760" r="6.3" fill="#000"/><circle cx="886.4" cy="759.4" r="6.2" fill="#0000f0"/><path d="M881.5 763.5A6.2 6.2 0 0 0 892 762L886 762.5Z" fill="#000090"/><path d="M882 755.5L885 753.5L889.5 753.8L891 755L888.5 757L886.5 756L884 758L882.5 757.5Z" fill="#00b800"/><path d="M884 754.5L886.5 754L885 756Z" fill="#40ff40"/><path d="M887.5 761L891.5 757L892.5 760L891 763.5L889 762.5Z" fill="#00a000"/><path d="M888 760.5L891 757.8L890 760Z" fill="#40ff40"/><path d="M880.3 760.5L883.5 760L884.5 763.5L881.5 764Z" fill="#00a000"/><path d="M881.5 761L883 761L882.5 762.5Z" fill="#60ff60"/><path d="M888 755L891 758" stroke="#0000a0" stroke-width="1.2"/></svg>
</div>
</body></html>
